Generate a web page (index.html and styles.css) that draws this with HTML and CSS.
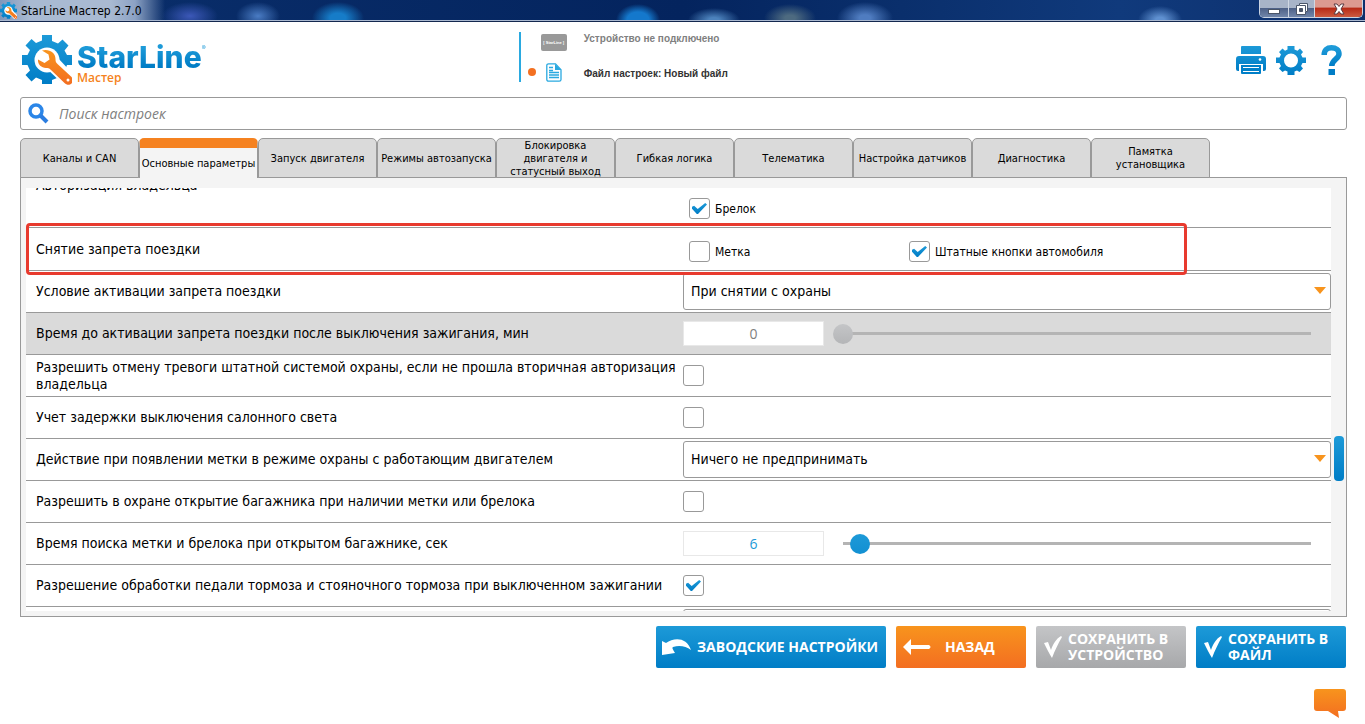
FILE: index.html
```html
<!DOCTYPE html>
<html lang="ru">
<head>
<meta charset="utf-8">
<title>StarLine Мастер 2.7.0</title>
<link rel="stylesheet" href="styles.css">
</head>
<body>
<svg class="defs" width="0" height="0" aria-hidden="true">
  <defs>
    <linearGradient id="blue" x1="0" y1="0" x2="0" y2="1"><stop offset="0" stop-color="#1d9ad8"/><stop offset="1" stop-color="#007dc6"/></linearGradient>
    <linearGradient id="orange" x1="0" y1="0" x2="0" y2="1"><stop offset="0" stop-color="#f8941d"/><stop offset="1" stop-color="#f36e21"/></linearGradient>
    <symbol id="logo" viewBox="0 0 50 50">
      <path fill="url(#blue)" d="M20 0h10v6l6 2.500 4.500-4 6 6-4 5L45 20h5v10h-5l-2 5 4 4-7 8-5-4-5 2v4H20v-4l-6-2.500-4.500 4-6-6.500 4.500-4.500L5.500 30H0V20h5.500L8 15 3.500 10.500l6-6.500L14 8l6-2.500z"/>
      <circle cx="25" cy="25" r="12.500" fill="#fff"/>
      <path fill="#fff" d="M24 33 35 22 52 40 50 51 42 50z"/>
      <path fill="url(#orange)" d="M20 15.500c7-2 13.500 2 13.500 8.500 0 2 0 3 2 5l13.500 12.500c3 3 2 5.500.5 7-2 2-5 1.500-7-.5L29 35c-2-2-3-2-5-2-5 0-8.500-4-8-8.500l6.500 3.500 5-3.500-1-5z"/>
      <circle cx="46" cy="45" r="1.500" fill="#fff"/>
    </symbol>
  </defs>
</svg>

<div class="titlebar">
  <svg class="titlebar-icon" viewBox="0 0 50 50"><use href="#logo"/></svg>
  <span class="titlebar-text">StarLine Мастер 2.7.0</span>
  <div class="window-buttons">
    <button class="win-btn win-min" aria-label="Свернуть"><svg viewBox="0 0 14 12" width="14" height="12"><rect x="1.500" y="6.500" width="11" height="4" fill="#fff" stroke="#4a5568"/></svg></button>
    <button class="win-btn win-max" aria-label="Развернуть"><svg viewBox="0 0 14 12" width="14" height="12"><path d="M4.500.5h8v8h-2v3h-9v-9h3z" fill="#fff" stroke="#4a5568"/><path d="M4.500 5.500h3v3h-3z" fill="#4a5568" stroke="#4a5568"/><path d="M5 2.500h5.500V8" fill="none" stroke="#4a5568"/></svg></button>
    <button class="win-btn win-close" aria-label="Закрыть"><svg viewBox="0 0 14 12" width="14" height="12"><path d="M2 1h3l2 2.500L9 1h3L9 6l3 5H9L7 8.500 5 11H2l3-5z" fill="#fff" stroke="#5b3b42"/></svg></button>
  </div>
</div>

<header class="header">
  <div class="brand">
    <svg class="brand-icon" viewBox="0 0 50 50"><use href="#logo"/></svg>
    <div class="brand-words">
      <div class="brand-name">StarLine<sup class="brand-mark">®</sup></div>
      <div class="brand-sub">Мастер</div>
    </div>
  </div>
  <div class="status">
    <div class="status-row">
      <span class="status-icon"><span class="device">[ StarLine ]</span></span>
      <span class="status-off">Устройство не подключено</span>
    </div>
    <div class="status-row">
      <span class="dot"></span>
      <span class="status-icon"><svg width="16" height="19" viewBox="0 0 16 19"><path d="M2.500.8h7l5.500 6v9.700a1.700 1.700 0 0 1-1.700 1.700H2.500A1.700 1.700 0 0 1 .8 16.500v-14A1.700 1.700 0 0 1 2.500.8z" fill="#fff" stroke="#2aa9e0" stroke-width="1.300"/><path d="M9 1l6 6H9z" fill="#2aa9e0"/><path d="M3 4.500h4M3 7.500h4M3 9.500h10M3 12h10M3 14.500h10" stroke="#2aa9e0" stroke-width="1.300"/></svg></span>
      <span class="status-file">Файл настроек: Новый файл</span>
    </div>
  </div>
  <div class="tools">
    <button class="tool" aria-label="Печать"><svg width="30" height="30" viewBox="0 0 30 30"><path fill="url(#blue)" d="M6 1h18a1 1 0 0 1 1 1v7H5V2a1 1 0 0 1 1-1zM3 11h24a3 3 0 0 1 3 3v10a2 2 0 0 1-2 2h-1v-7H3v7H2a2 2 0 0 1-2-2V14a3 3 0 0 1 3-3z"/><circle cx="24" cy="14.500" r="1.300" fill="#fff"/><path fill="#007fc8" d="M5 20h20v8a1 1 0 0 1-1 1H6a1 1 0 0 1-1-1z"/><path d="M7 22.500h16M7 26.500h16" stroke="#fff"/></svg></button>
    <button class="tool" aria-label="Настройки"><svg width="30" height="30" viewBox="0 0 30 30"><path fill="url(#blue)" fill-rule="evenodd" d="M11.500 1h7v3.500l3 1.200L24 3.500 27 7l-2 2.500 1.500 3H30v5.500h-3.500L25 21l2 2.500-3.500 3.500-2.500-1.500-2.500 1V30h-7v-3.500l-2.500-1L6.500 27 3 23.500 5 21l-1.500-3H0v-5.500h3.500L5 9.500 3 7l3.500-3.500L9 5.700l2.500-1.200zM15 8.500a7 7 0 1 0 0 14 7 7 0 1 0 0-14z"/></svg></button>
    <button class="tool" aria-label="Справка"><svg width="22" height="30" viewBox="0 0 22 30"><path fill="none" stroke="url(#blue)" stroke-width="5.500" d="M3.200 10C3.200 5 6 2.800 10.500 2.800S18 5 18 9c0 5-7.200 5.500-7.200 12"/><rect x="7.500" y="24" width="6.500" height="6" fill="#007dc6"/></svg></button>
  </div>
</header>

<main class="main">
  <label class="search">
    <svg width="21" height="21" viewBox="0 0 21 21"><circle cx="8" cy="8" r="6" fill="none" stroke="#2b86e8" stroke-width="3.500"/><path d="M12.500 12.500l6.500 6.500" stroke="#2b7de0" stroke-width="4"/></svg>
    <input class="search-input" type="search" placeholder="Поиск настроек" aria-label="Поиск настроек">
  </label>

  <nav class="tabs">
    <button class="tab">Каналы и CAN</button>
    <button class="tab tab-active">Основные параметры</button>
    <button class="tab">Запуск двигателя</button>
    <button class="tab">Режимы автозапуска</button>
    <button class="tab">Блокировка двигателя и статусный выход</button>
    <button class="tab">Гибкая логика</button>
    <button class="tab">Телематика</button>
    <button class="tab">Настройка датчиков</button>
    <button class="tab">Диагностика</button>
    <button class="tab">Памятка установщика</button>
  </nav>

  <section class="panel">
    <div class="viewport">
      <div class="row row-tall">
        <span class="row-label">Авторизация владельца</span>
        <div class="options"><label class="option"><input class="check" type="checkbox" checked>Брелок</label></div>
      </div>
      <div class="row row-marked">
        <span class="row-label">Снятие запрета поездки</span>
        <div class="options">
          <label class="option"><input class="check" type="checkbox">Метка</label>
          <label class="option"><input class="check" type="checkbox" checked>Штатные кнопки автомобиля</label>
        </div>
        <div class="highlight"></div>
      </div>
      <div class="row">
        <label class="row-label" for="cond">Условие активации запрета поездки</label>
        <div class="select-box"><select class="select" id="cond"><option>При снятии с охраны</option></select></div>
      </div>
      <div class="row row-disabled">
        <label class="row-label" for="t1">Время до активации запрета поездки после выключения зажигания, мин</label>
        <div class="slider"><input class="number" id="t1" type="text" value="0" disabled><input class="range" type="range" min="0" max="30" value="0" disabled aria-label="Время, мин"></div>
      </div>
      <div class="row">
        <label class="row-label" for="c1">Разрешить отмену тревоги штатной системой охраны, если не прошла вторичная авторизация владельца</label>
        <input class="check" id="c1" type="checkbox">
      </div>
      <div class="row">
        <label class="row-label" for="c2">Учет задержки выключения салонного света</label>
        <input class="check" id="c2" type="checkbox">
      </div>
      <div class="row">
        <label class="row-label" for="act">Действие при появлении метки в режиме охраны с работающим двигателем</label>
        <div class="select-box"><select class="select" id="act"><option>Ничего не предпринимать</option></select></div>
      </div>
      <div class="row">
        <label class="row-label" for="c3">Разрешить в охране открытие багажника при наличии метки или брелока</label>
        <input class="check" id="c3" type="checkbox">
      </div>
      <div class="row">
        <label class="row-label" for="t2">Время поиска метки и брелока при открытом багажнике, сек</label>
        <div class="slider"><input class="number" id="t2" type="text" value="6"><input class="range" type="range" min="5" max="33" value="6" aria-label="Время, сек"></div>
      </div>
      <div class="row">
        <label class="row-label" for="c4">Разрешение обработки педали тормоза и стояночного тормоза при выключенном зажигании</label>
        <input class="check" id="c4" type="checkbox" checked>
      </div>
      <div class="row">
        <span class="row-label"></span>
        <div class="select-box"><select class="select" aria-label="Режим"><option></option></select></div>
      </div>
    </div>
    <div class="scrollbar"><div class="scroll-thumb"></div></div>
  </section>
</main>

<footer class="footer">
  <div class="actions">
    <button class="action action-wide"><svg width="30" height="18" viewBox="0 0 30 18"><path fill="#fff" d="M0 3l4 2C12-1 25-1 29 12c-5-4-12-5-18-3-1 1-1 1 2 6L0 17z"/></svg><span>ЗАВОДСКИЕ НАСТРОЙКИ</span></button>
    <button class="action action-back"><svg width="28" height="16" viewBox="0 0 28 16"><path fill="#fff" d="M0 8l8-8v6h18q3 2 0 4H8v6z"/></svg><span>НАЗАД</span></button>
    <button class="action action-save" disabled><svg width="18" height="22" viewBox="0 0 18 22"><path fill="#fff" d="M0 7l4-1 3 8C9 8 12 3 17 0l1 1c-4 7-7 13-10 21C5 17 3 13 0 7z"/></svg><span>СОХРАНИТЬ В УСТРОЙСТВО</span></button>
    <button class="action action-save"><svg width="18" height="22" viewBox="0 0 18 22"><path fill="#fff" d="M0 7l4-1 3 8C9 8 12 3 17 0l1 1c-4 7-7 13-10 21C5 17 3 13 0 7z"/></svg><span>СОХРАНИТЬ В ФАЙЛ</span></button>
  </div>
  <button class="chat" aria-label="Обратная связь"><svg width="32" height="30" viewBox="0 0 32 30"><path fill="url(#orange)" d="M3 0h26a3 3 0 0 1 3 3v16a3 3 0 0 1-3 3h-5l1 7-11-7H3a3 3 0 0 1-3-3V3a3 3 0 0 1 3-3z"/></svg></button>
</footer>
</body>
</html>
```
FILE: styles.css
```css
* { box-sizing: border-box; }

body {
  margin: 0;
  height: 100vh;
  display: flex;
  flex-direction: column;
  overflow: hidden;
  background: #fff;
  color: #000;
  font-family: "DejaVu Sans Condensed", "Noto Sans", sans-serif;
  font-size: 14px;
}

button { border: 0; padding: 0; margin: 0; background: none; font-family: inherit; color: inherit; }
svg { display: block; flex: none; }
.defs { position: absolute; }

/* Window title bar */
.titlebar {
  flex: none;
  display: flex;
  align-items: center;
  height: 22px;
  border-bottom: 1px solid #14284f;
  box-shadow: inset 0 -1px #a9b8d0;
  background:
    linear-gradient(90deg, #7f97bb 0, #a9bad2 30px, #a9bad2 110px, #8ca2c4 135px, transparent 165px),
    radial-gradient(ellipse 28px 14px at 190px 16px, #3c58b8 0, transparent 100%),
    radial-gradient(ellipse 22px 14px at 258px 16px, #4a7cc4 0, transparent 100%),
    radial-gradient(ellipse 26px 16px at 338px 18px, #167cc8 30%, transparent 100%),
    radial-gradient(ellipse 22px 16px at 638px 20px, #1478cc 50%, transparent 100%),
    radial-gradient(ellipse 26px 12px at 714px 20px, #4c82bc 20%, transparent 100%),
    radial-gradient(ellipse 26px 14px at 790px 18px, #4d6a80 20%, transparent 100%),
    radial-gradient(ellipse 28px 16px at 865px 18px, #4f7cc0 20%, transparent 100%),
    radial-gradient(ellipse 22px 14px at 1160px 20px, #5f90d0 20%, transparent 100%),
    linear-gradient(90deg, #0a2f6c 0, #04245e 50%, #0a2f6c 66%, #103a7c 82%, #0d2f6c 100%);
}
.titlebar-icon { width: 17px; height: 17px; }
.titlebar-text { flex: 1; margin-left: 4px; font: 12px "DejaVu Sans Condensed", sans-serif; }
.window-buttons {
  align-self: flex-start;
  display: flex;
  height: 18px;
  margin-right: 2px;
  border: 1px solid #c9d3e2;
  border-top: 0;
  border-radius: 0 0 5px 5px;
  overflow: hidden;
}
.win-btn { display: flex; align-items: center; justify-content: center; background: linear-gradient(#a8b4c8 0 45%, #4f6288 50%, #7186aa); }
.win-min { width: 28px; }
.win-max { width: 27px; border: 1px solid #d0d8e4; border-width: 0 1px; }
.win-close { width: 47px; background: linear-gradient(#dc9a90 0 40%, #b82c18 50%, #cc5a40); }

/* Header */
.header { flex: none; display: flex; align-items: flex-start; height: 75px; padding: 0 22px; }
.brand { display: flex; flex: 100 1 0; padding-top: 13px; }
.brand-icon { width: 50px; height: 50px; }
.brand-words { margin-left: 5px; }
.brand-name {
  display: flex;
  margin-top: 7px;
  font: 800 30px/30px Inter, sans-serif;
  background: linear-gradient(#1d9ad8 20%, #007dc6 80%);
  background-clip: text;
  color: transparent;
  white-space: nowrap;
}
.brand-mark { font: 6px/12px Inter, sans-serif; }
.brand-sub { font: 600 12px/12px "Open Sans", sans-serif; color: #f58220; }
.status {
  flex: 144 1 0;
  display: flex;
  flex-direction: column;
  justify-content: space-between;
  height: 50px;
  margin-top: 10px;
  border-left: 2px solid #2aa9e0;
  font: bold 10px "Liberation Sans", sans-serif;
}
.status-row { display: flex; align-items: center; height: 20px; position: relative; }
.status-icon { width: 26px; margin: 0 17px 0 20px; display: flex; justify-content: center; }
.device {
  width: 26px;
  height: 17px;
  border-radius: 2px;
  background: #999;
  color: #fff;
  font: bold 4px/17px "Liberation Sans", sans-serif;
  text-align: center;
  white-space: nowrap;
}
.dot { position: absolute; left: 7px; top: 6px; width: 8px; height: 8px; border-radius: 50%; background: #f37021; }
.status-off { color: #808080; padding-bottom: 8px; }
.status-file { color: #333; padding-top: 2px; }
.tools { display: flex; align-items: center; gap: 10px; padding-top: 23px; }
.tool:last-child { margin-left: 5px; }

/* Search and tabs */
.main { flex: 1; min-height: 0; display: flex; flex-direction: column; padding: 0 18px 0 20px; }
.search { flex: none; display: flex; align-items: center; height: 33px; padding: 0 7px; border: 1px solid #999; border-radius: 3px; }
.search-input {
  flex: 1;
  margin-left: 10px;
  padding: 0;
  border: 0;
  outline: 0;
  background: none;
  font: italic 14px "Open Sans", sans-serif;
}
.search-input::placeholder { color: #808080; }
.tabs { flex: none; display: flex; height: 40px; margin-top: 8px; padding-right: 137px; position: relative; z-index: 1; }
.tab {
  flex: 1 1 0;
  min-width: 0;
  border: 1px solid #999;
  border-radius: 5px 5px 0 0;
  background: #dadada;
  font-size: 11px;
  line-height: 13px;
}
.tab-active { border-top: 10px solid #f58220; border-bottom: 0; background: #f4f4f4; }

/* Settings list */
.panel {
  flex: 1;
  min-height: 0;
  display: flex;
  margin-top: -1px;
  padding: 10px 1px 5px 5px;
  border: 1px solid #999;
  background: #f4f4f4;
}
.viewport { flex: 1; overflow: hidden; background: #fff; }
.row {
  display: grid;
  grid-template-columns: 647fr 648fr;
  align-items: center;
  height: 42px;
  padding-left: 10px;
  border-bottom: 1px solid #999;
}
.row-label { font-size: 14px; line-height: 17px; }
.row-tall { height: 85px; margin-top: -45px; }
.row-tall .options { align-self: end; padding-bottom: 8px; }
.row-marked { position: relative; z-index: 1; height: 43px; }
.row-disabled { background: #dadada; }
.highlight {
  position: absolute;
  top: -5px;
  left: 0;
  width: 89%;
  height: 52px;
  border: 3px solid #e83a2e;
  border-radius: 4px;
  pointer-events: none;
}
.options { display: grid; grid-template-columns: 220px 1fr; padding: 5px 0 0 6px; }
.option { display: flex; align-items: center; gap: 5px; font-size: 12px; }
.check {
  appearance: none;
  width: 21px;
  height: 21px;
  margin: 0;
  border: 1px solid #999;
  border-radius: 3px;
  background: #fff;
}
.check:checked::before {
  content: "";
  display: block;
  width: 15px;
  height: 11px;
  margin: 4px 2px;
  background: linear-gradient(#1d9ad8, #007dc6);
  clip-path: polygon(0 35%, 14% 25%, 38% 55%, 88% 0, 100% 14%, 40% 100%, 32% 100%, 0 52%);
}
.select-box { position: relative; height: 37px; }
.select-box::after {
  content: "";
  position: absolute;
  right: 5px;
  top: 14px;
  border: 6px solid transparent;
  border-top: 7px solid #f8941d;
  border-bottom: 0;
}
.select {
  appearance: none;
  width: 100%;
  height: 37px;
  padding: 0 7px 2px;
  border: 1px solid #999;
  border-radius: 3px;
  background: #fff;
  color: #000;
  font: 14px "DejaVu Sans Condensed", sans-serif;
}
.slider { display: flex; align-items: center; gap: 9px; padding-right: 10px; }
.number {
  width: 141px;
  height: 25px;
  border: 1px solid #e8e8e8;
  background: #fff;
  color: #1d9ad8;
  font: 14px "Open Sans", sans-serif;
  text-align: center;
}
.number:disabled { color: #808080; }
.range {
  appearance: none;
  flex: 1;
  height: 20px;
  margin: 0;
  background: linear-gradient(#b4b4b4, #b4b4b4) center / calc(100% - 20px) 3px no-repeat;
}
.range::-webkit-slider-thumb { appearance: none; width: 20px; height: 20px; border-radius: 50%; background: linear-gradient(#1d9ad8, #1290d2); }
.range:disabled::-webkit-slider-thumb { background: linear-gradient(#c4c5c7, #b4b5b7); }
.scrollbar { flex: none; display: flex; flex-direction: column; width: 14px; padding: 248px 1px 0 3px; }
.scroll-thumb { height: 45px; border-radius: 4px; background: linear-gradient(#1d9ad8, #007dc6); }

/* Footer */
.footer { flex: none; display: flex; flex-direction: column; align-items: flex-end; gap: 21px; padding: 9px 19px 5px; }
.actions { display: flex; gap: 10px; }
.action {
  display: flex;
  align-items: center;
  height: 42px;
  border-radius: 2px;
  background: linear-gradient(#1d9ad8, #007dc6);
  color: #fff;
  font: bold 14px/16px "Open Sans", sans-serif;
  text-align: left;
}
.action-wide { width: 230px; padding-left: 6px; gap: 5px; }
.action-back { width: 130px; padding-left: 7px; gap: 14px; background: linear-gradient(#f8941d, #f36e21); }
.action-save { width: 150px; padding-left: 8px; gap: 6px; }
.action:disabled { background: linear-gradient(#c4c5c7, #a7a8aa); }
```
